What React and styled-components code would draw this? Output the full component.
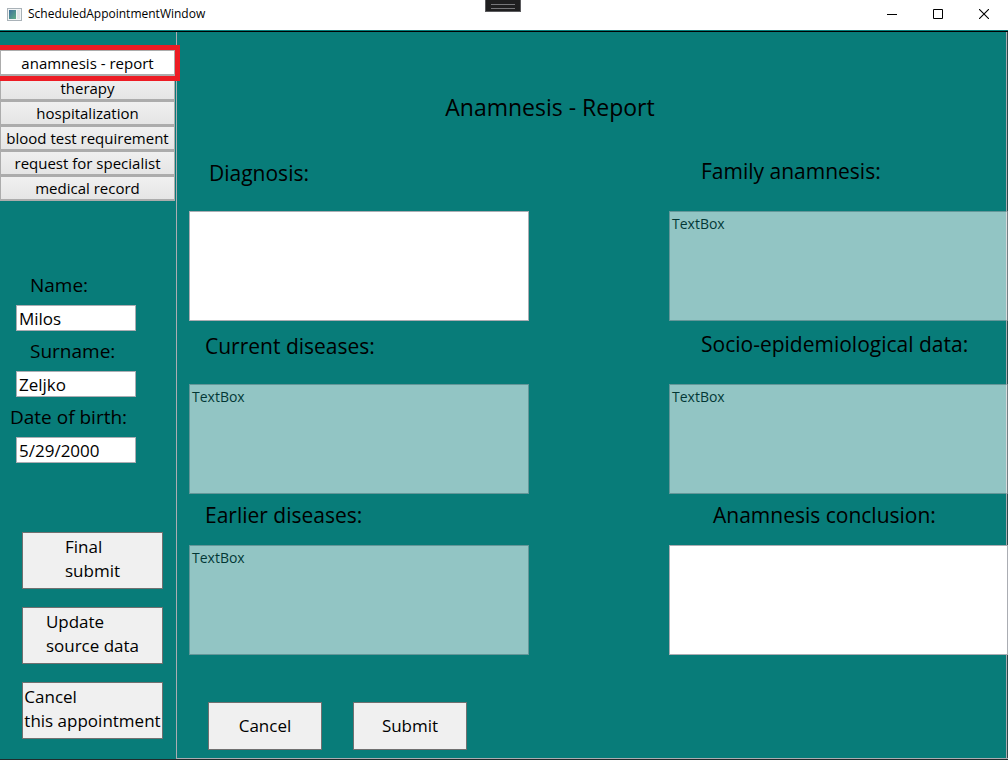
import React, { useState } from "react";
import styled, { createGlobalStyle } from "styled-components";

const teal = "#087c79";
const line = "#abadb3";

const GlobalStyle = createGlobalStyle`
  * { box-sizing: border-box; }
  body {
    margin: 0;
    background: ${teal};
    color: #000;
    font-family: "Open Sans", "Noto Sans", sans-serif;
  }
  button, input, textarea { font: inherit; color: inherit; border-radius: 0; }
`;

const Window = styled.div`
  min-height: 100vh;
  display: flex;
  flex-direction: column;
  overflow: hidden;
  background: ${teal};
  border-bottom: 1px solid #202c2c;
`;

const TitleBar = styled.header`
  position: relative;
  height: 30px;
  display: flex;
  align-items: center;
  padding: 0 1px 2px 7px;
  background: #fff;
`;

const Title = styled.h1`
  flex: 1;
  margin: 0 0 0 6px;
  font-size: 12px;
  line-height: 16px;
  font-weight: 400;
`;

const DebugHandle = styled.div`
  position: absolute;
  top: 0;
  left: 50%;
  margin-left: -19px;
  width: 36px;
  height: 12px;
  padding: 4px 5px 0;
  background: #1f1f20;
  border: 1px solid #5b5b5e;
  border-top: 0;

  &::before {
    content: "";
    display: block;
    height: 3px;
    border: solid #77777a;
    border-width: 1px 0;
  }
`;

const CaptionButton = styled.button`
  width: 46px;
  height: 28px;
  display: flex;
  align-items: center;
  justify-content: center;
  padding: 0;
  border: 0;
  background: transparent;
`;

const Body = styled.div`
  flex: 1;
  display: grid;
  grid-template-columns: 176px minmax(0, 1fr);
  border-top: 1px solid #000;
  margin-top: 1px;
`;

const Sidebar = styled.aside`
  display: flex;
  flex-direction: column;
  padding-top: 18px;
`;

const Tabs = styled.nav`
  display: flex;
  flex-direction: column;
  margin-right: 1px;
`;

const Tab = styled.button`
  position: relative;
  height: ${(p) => (p.$active ? 26 : 25)}px;
  padding: 0;
  border: 1px solid #acacac;
  border-bottom-width: 2px;
  font-size: 15px;
  line-height: 22px;
  white-space: nowrap;
  background: ${(p) => (p.$active ? "#fff" : "linear-gradient(#f0f0f0, #e5e5e5)")};
  z-index: ${(p) => (p.$active ? 1 : 0)};

  &::after {
    content: "";
    display: ${(p) => (p.$active ? "block" : "none")};
    position: absolute;
    inset: -6px -6px -7px -1px;
    border: 5px solid #ed1c24;
    border-left: 0;
    pointer-events: none;
  }
`;

const Patient = styled.section`
  display: flex;
  flex-direction: column;
  gap: 6px;
  margin-top: 70px;
`;

const PatientField = styled.div`
  display: flex;
  flex-direction: column;
  gap: 6px;
`;

const PatientLabel = styled.label`
  padding-left: ${(p) => (p.$wide ? 10 : 30)}px;
  font-size: 19px;
  line-height: 28px;
  white-space: nowrap;
`;

const PatientInput = styled.input`
  width: 120px;
  height: 26px;
  margin-left: 16px;
  padding: 0 2px;
  border: 1px solid ${line};
  background: #fff;
  font-size: 17px;
`;

const SideActions = styled.div`
  display: flex;
  flex-direction: column;
  gap: 18px;
  margin: 69px 13px 0 22px;
`;

const ActionButton = styled.button`
  display: flex;
  align-items: center;
  justify-content: center;
  padding: 0;
  border: 1px solid #707070;
  background: #f0f0f0;
  font-size: 17px;
  line-height: 24px;
  text-align: left;
  white-space: pre;
`;

const SideButton = styled(ActionButton)`
  height: 57px;
  padding-bottom: 4px;
`;

const FormButton = styled(ActionButton)`
  width: 114px;
  height: 48px;
`;

const Main = styled.main`
  display: flex;
  flex-direction: column;
  border: 1px solid ${line};
  border-top: 0;
  border-right: 0;
  padding: 60px 0 8px 12px;
  box-shadow: inset -1px 0 #30494a, inset -2px 0 ${line};
`;

const Heading = styled.h2`
  margin: 0 97px 0 0;
  font-size: 23px;
  line-height: 30px;
  font-weight: 400;
  text-align: center;
`;

const Fields = styled.div`
  display: grid;
  grid-template-columns: minmax(0, 340fr) minmax(0, 339fr);
  column-gap: 140px;
  margin-top: 34px;
`;

const Field = styled.div`
  display: flex;
  flex-direction: column;
  justify-content: flex-end;
  gap: ${(p) => p.$gap}px;
  padding-bottom: ${(p) => p.$after}px;
`;

const FieldLabel = styled.label`
  padding-left: ${(p) => p.$indent}px;
  font-size: 21px;
  line-height: 30px;
  white-space: nowrap;
`;

const FieldBox = styled.textarea`
  display: block;
  width: 100%;
  height: 110px;
  padding: 1px 2px;
  resize: none;
  border: 1px solid ${line};
  background: #fff;
  font-size: 14px;
  line-height: 22px;

  &:disabled {
    opacity: 0.56;
  }
`;

const FormActions = styled.div`
  display: flex;
  gap: 31px;
  margin: 47px 0 0 19px;
`;

const tabs = [
  "anamnesis - report",
  "therapy",
  "hospitalization",
  "blood test requirement",
  "request for specialist",
  "medical record",
];

const patient = [
  { id: "name", label: "Name:", value: "Milos" },
  { id: "surname", label: "Surname:", value: "Zeljko" },
  { id: "birth", label: "Date of birth:", value: "5/29/2000", wide: true },
];

const fields = [
  { id: "diagnosis", label: "Diagnosis:", indent: 20, gap: 23, after: 8 },
  { id: "family", label: "Family anamnesis:", indent: 32, gap: 25, after: 8, locked: true },
  { id: "current", label: "Current diseases:", indent: 16, gap: 23, after: 6, locked: true },
  { id: "socio", label: "Socio-epidemiological data:", indent: 32, gap: 25, after: 6, locked: true },
  { id: "earlier", label: "Earlier diseases:", indent: 16, gap: 15, after: 0, locked: true },
  { id: "conclusion", label: "Anamnesis conclusion:", indent: 44, gap: 15, after: 0 },
];

function AppIcon() {
  return (
    <svg width="15" height="13" viewBox="0 0 15 13" aria-hidden="true">
      <defs>
        <linearGradient id="pane" x1="0" y1="0" x2="1" y2="1">
          <stop offset="0" stopColor="#3c6f9c" />
          <stop offset="1" stopColor="#5fae86" />
        </linearGradient>
      </defs>
      <rect x="0.5" y="0.5" width="14" height="12" fill="#f3f5f6" stroke="#a9b2b8" />
      <rect x="2" y="2" width="7" height="9" fill="url(#pane)" />
      <rect x="10" y="2" width="3" height="9" fill="#dfe4e7" />
    </svg>
  );
}

export default function App() {
  const [active, setActive] = useState(0);
  return (
    <>
      <GlobalStyle />
      <Window>
        <TitleBar>
          <AppIcon />
          <Title>ScheduledAppointmentWindow</Title>
          <DebugHandle />
          <CaptionButton aria-label="Minimize">
            <svg width="10" height="11" viewBox="0 0 10 11">
              <path d="M0 5.5H10" stroke="#000" />
            </svg>
          </CaptionButton>
          <CaptionButton aria-label="Maximize">
            <svg width="10" height="10" viewBox="0 0 10 10">
              <path d="M.5 .5H9.5V9.5H.5Z" fill="none" stroke="#000" />
            </svg>
          </CaptionButton>
          <CaptionButton aria-label="Close">
            <svg width="10" height="10" viewBox="0 0 10 10">
              <path d="M0 0L10 10M10 0L0 10" stroke="#000" strokeWidth="1.1" />
            </svg>
          </CaptionButton>
        </TitleBar>
        <Body>
          <Sidebar>
            <Tabs>
              {tabs.map((name, i) => (
                <Tab key={name} type="button" $active={i === active} onClick={() => setActive(i)}>
                  {name}
                </Tab>
              ))}
            </Tabs>
            <Patient>
              {patient.map((f) => (
                <PatientField key={f.id}>
                  <PatientLabel htmlFor={f.id} $wide={f.wide}>{f.label}</PatientLabel>
                  <PatientInput id={f.id} type="text" defaultValue={f.value} />
                </PatientField>
              ))}
            </Patient>
            <SideActions>
              <SideButton type="button">{"Final\nsubmit"}</SideButton>
              <SideButton type="button">{"Update\nsource data"}</SideButton>
              <SideButton type="button">{"Cancel\nthis appointment"}</SideButton>
            </SideActions>
          </Sidebar>
          <Main>
            <Heading>Anamnesis - Report</Heading>
            <Fields>
              {fields.map((f) => (
                <Field key={f.id} $gap={f.gap} $after={f.after}>
                  <FieldLabel htmlFor={f.id} $indent={f.indent}>{f.label}</FieldLabel>
                  <FieldBox id={f.id} disabled={f.locked} defaultValue={f.locked ? "TextBox" : ""} />
                </Field>
              ))}
            </Fields>
            <FormActions>
              <FormButton type="button">Cancel</FormButton>
              <FormButton type="button">Submit</FormButton>
            </FormActions>
          </Main>
        </Body>
      </Window>
    </>
  );
}
